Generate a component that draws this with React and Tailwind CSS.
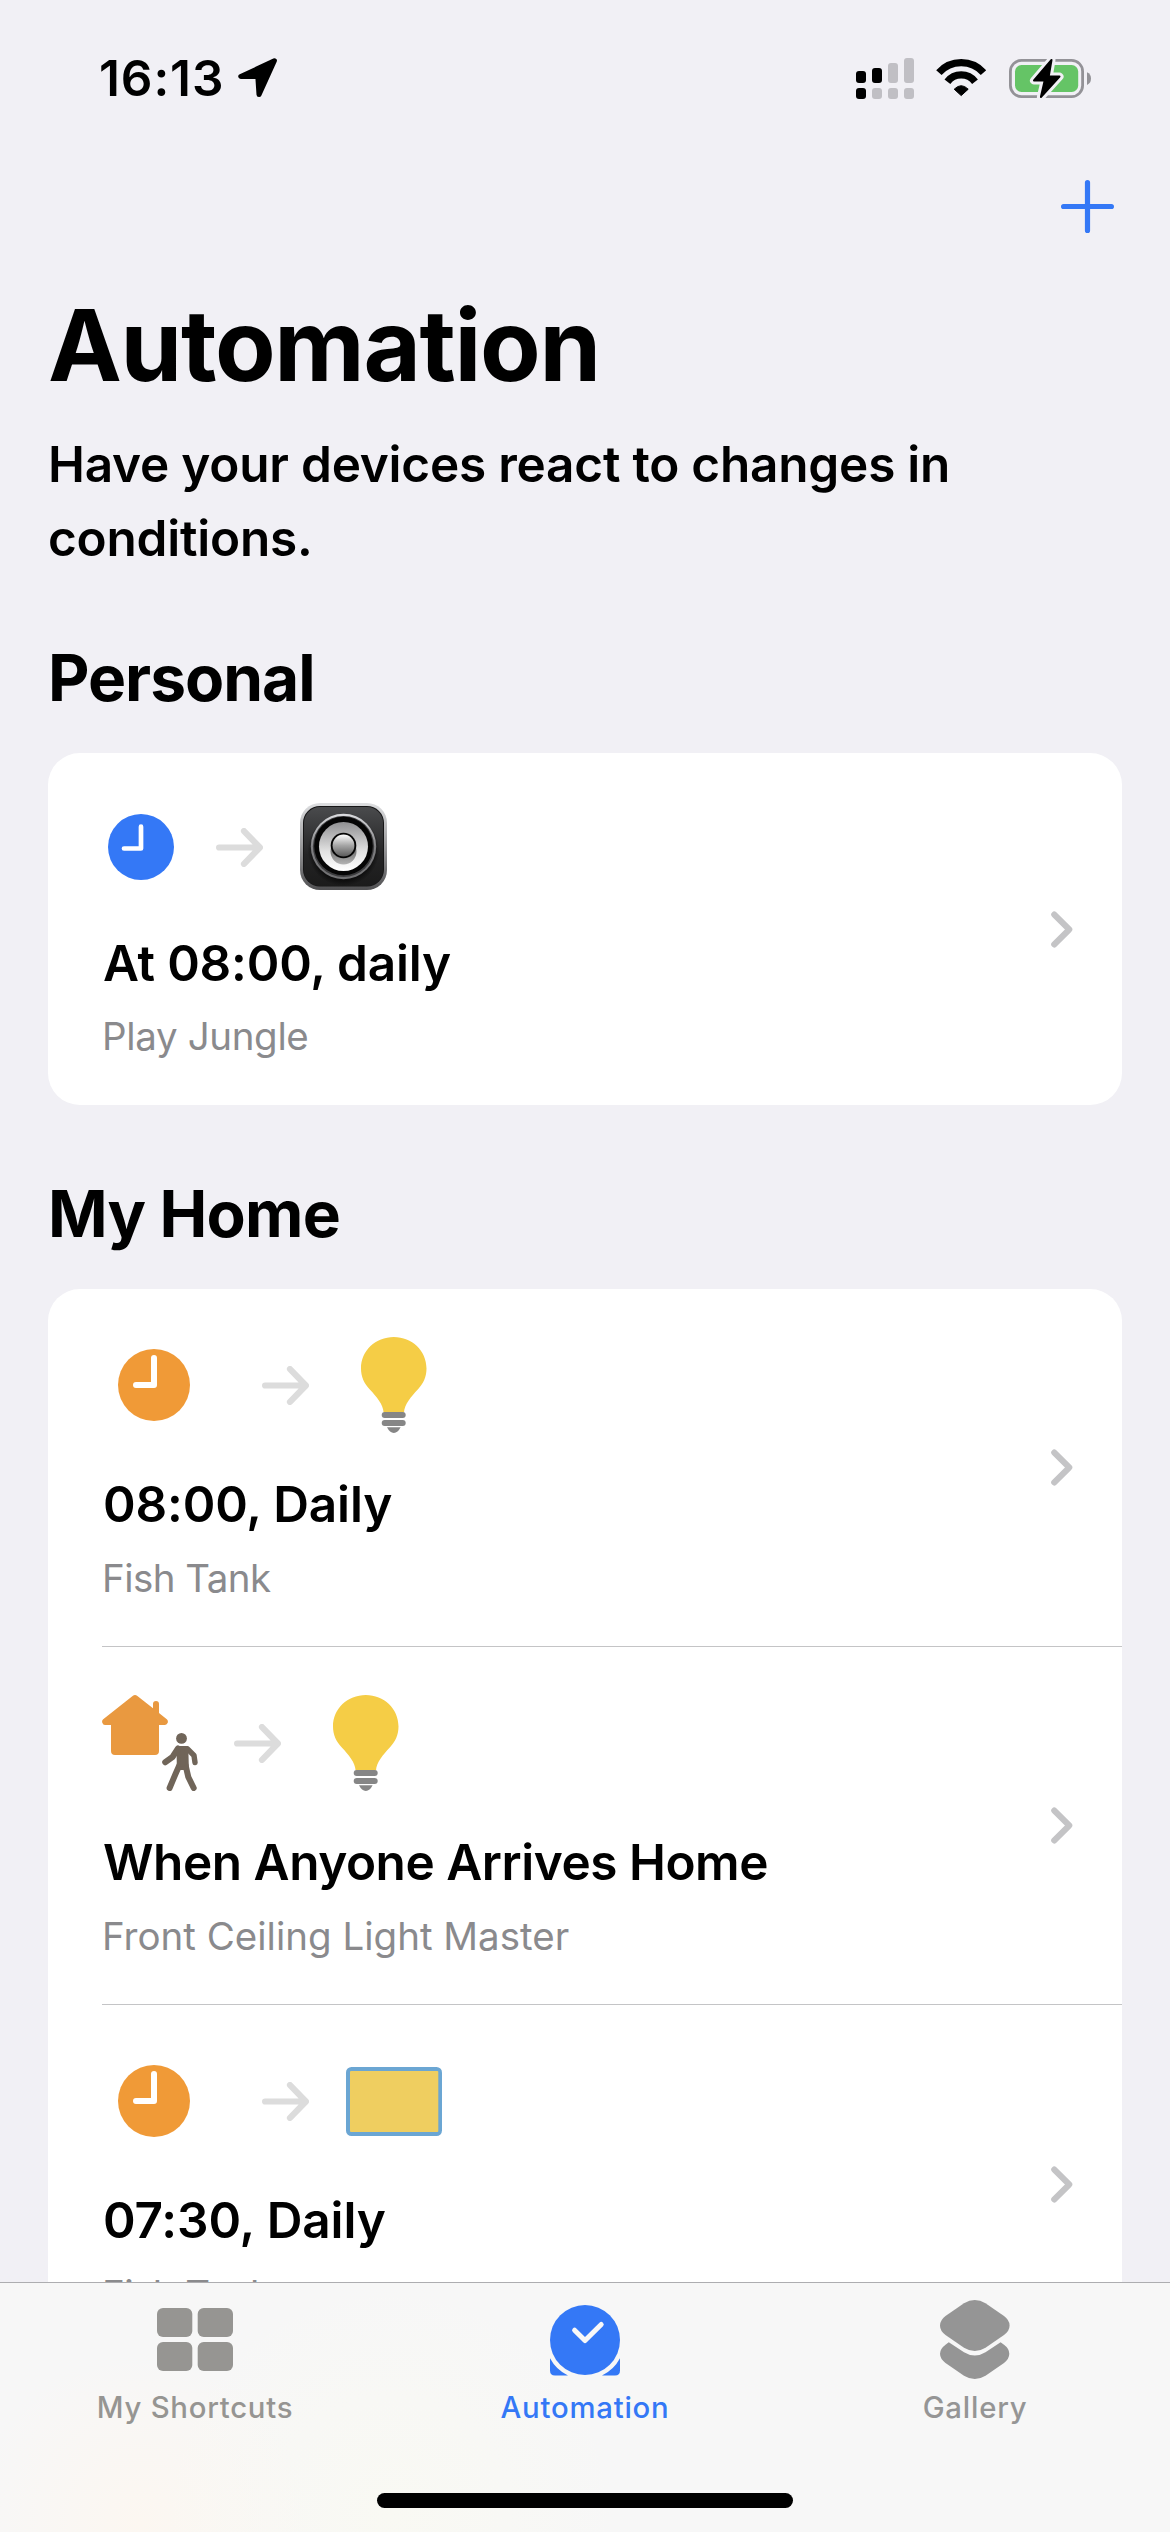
import clsx from 'clsx';

const LocationIcon = () => (
  <svg width="40" height="40" viewBox="0 0 40 40" stroke="#000" strokeWidth="5" strokeLinejoin="round">
    <path d="M36.4 2.8L2.8 18.5H19.8L21 36.6Z" />
  </svg>
);

const SignalIcon = () => (
  <svg width="58" height="41" viewBox="0 0 58 41">
    <rect x="0" y="13" width="10" height="12" rx="3" />
    <rect x="16" y="10" width="10" height="15" rx="3" />
    <g fill="#c0bfc4">
      <rect x="32" y="5" width="10" height="20" rx="3" />
      <rect x="48" y="0" width="10" height="25" rx="3" />
      <rect x="16" y="30" width="10" height="11" rx="3" />
      <rect x="32" y="30" width="10" height="11" rx="3" />
      <rect x="48" y="30" width="10" height="11" rx="3" />
    </g>
    <rect x="0" y="30" width="10" height="11" rx="3" />
  </svg>
);

const WifiIcon = () => (
  <svg width="51" height="38" viewBox="0 0 51 38" fill="none" stroke="#000" strokeWidth="7.3">
    <path d="M2.9 13.6A30 30 0 0 1 47.5 13.6" />
    <path d="M11.4 22.7A17.4 17.4 0 0 1 39 22.7" />
    <path d="M18.2 30.2Q25.2 23.2 32.2 30.2L25.2 36.6Z" fill="#000" stroke="#000" strokeWidth="1" strokeLinejoin="round" />
  </svg>
);

const BatteryIcon = () => {
  const bolt = 'M42.5 1L25 21.5H35.7L31.9 38L50.5 17.6H39.7Z';
  return (
    <svg width="82" height="39" viewBox="0 0 82 39" className="overflow-visible">
      <rect x="1.4" y="1.4" width="72.2" height="36.2" rx="11" fill="none" stroke="#939297" strokeWidth="2.8" />
      <path d="M78 13.2Q82 15 82 19.5T78 26Z" fill="#939297" />
      <rect x="6" y="6" width="63.2" height="27" rx="6.5" fill="#65c466" />
      <path d={bolt} fill="#f1f0f5" stroke="#f1f0f5" strokeWidth="8" strokeLinejoin="round" />
      <path d={bolt} stroke="#000" strokeWidth="2" strokeLinejoin="round" />
    </svg>
  );
};

const ClockBlue = () => (
  <svg width="66" height="66" viewBox="0 0 66 66">
    <circle cx="33" cy="33" r="33" fill="#3478f6" />
    <path d="M33 12.7V34.5H16" fill="none" stroke="#fff" strokeWidth="4.7" strokeLinecap="round" strokeLinejoin="round" />
  </svg>
);

const ClockOrange = () => (
  <svg width="72" height="72" viewBox="0 0 72 72">
    <circle cx="36" cy="36" r="36" fill="#f09a37" />
    <path d="M36 9V36H18" fill="none" stroke="#fff" strokeWidth="6" strokeLinecap="round" strokeLinejoin="round" />
  </svg>
);

const ArrowIcon = () => (
  <svg width="47" height="39" viewBox="0 0 47 39" fill="none" stroke="#dcdcdc" strokeWidth="6.2" strokeLinecap="round" strokeLinejoin="round">
    <path d="M3.1 19.5H43.5M28 3.1L43.9 19.5L28 35.9" />
  </svg>
);

const SpeakerIcon = () => (
  <svg width="87" height="87" viewBox="0 0 87 87">
    <defs>
      <linearGradient id="spk-edge" x1="0" y1="0" x2="0" y2="1">
        <stop offset="0" stopColor="#dedfe1" />
        <stop offset="0.5" stopColor="#9a9a9c" />
        <stop offset="1" stopColor="#505052" />
      </linearGradient>
      <linearGradient id="spk-body" x1="0" y1="0" x2="0" y2="1">
        <stop offset="0" stopColor="#4a4b4d" />
        <stop offset="0.6" stopColor="#242425" />
        <stop offset="1" stopColor="#1b1b1b" />
      </linearGradient>
      <radialGradient id="spk-shade">
        <stop offset="0.7" stopColor="#000" />
        <stop offset="1" stopColor="#000" stopOpacity="0" />
      </radialGradient>
      <linearGradient id="spk-ring" x1="0" y1="0" x2="0" y2="1">
        <stop offset="0" stopColor="#dcdde0" />
        <stop offset="0.5" stopColor="#808083" />
        <stop offset="1" stopColor="#6f6f71" />
      </linearGradient>
      <linearGradient id="spk-cone" x1="0" y1="0" x2="0" y2="1">
        <stop offset="0" stopColor="#909092" />
        <stop offset="0.6" stopColor="#e2e2e2" />
        <stop offset="1" stopColor="#fff" />
      </linearGradient>
      <linearGradient id="spk-drop" x1="0" y1="0" x2="0" y2="1">
        <stop offset="0.5" stopColor="#777" />
        <stop offset="1" stopColor="#b4b4b4" />
      </linearGradient>
      <linearGradient id="spk-dome" x1="0" y1="0" x2="0" y2="1">
        <stop offset="0" stopColor="#fff" />
        <stop offset="0.5" stopColor="#a5a5a5" />
        <stop offset="1" stopColor="#5c5c5c" />
      </linearGradient>
    </defs>
    <rect width="87" height="87" rx="20" fill="url(#spk-edge)" />
    <rect x="3" y="3" width="81" height="80.5" rx="17" fill="#161617" />
    <rect x="4" y="4" width="79" height="79" rx="16" fill="url(#spk-body)" />
    <circle cx="43.5" cy="47" r="36" fill="url(#spk-shade)" />
    <circle cx="43.5" cy="43.5" r="32.7" fill="url(#spk-ring)" />
    <circle cx="43.5" cy="43.5" r="30.6" fill="#3c3c3e" />
    <circle cx="43.5" cy="43" r="29.3" fill="#050505" />
    <circle cx="43.5" cy="43.5" r="24.5" fill="url(#spk-cone)" />
    <circle cx="43.5" cy="48.5" r="13" fill="url(#spk-drop)" />
    <circle cx="43.5" cy="42.5" r="12.8" fill="#050505" />
    <circle cx="43.5" cy="42.5" r="10.9" fill="url(#spk-dome)" />
  </svg>
);

const BulbIcon = () => (
  <svg width="66" height="96" viewBox="0 0 66 96">
    <path
      fill="#f5cd46"
      d="M32.8 0C51 0 65.5 13.8 65.5 31.5C65.5 40 62.3 46.6 57 52.3C50 59.8 43.4 67.5 43 75.5H22.6C22.2 67.5 15.6 59.8 8.6 52.3C3.3 46.6 0 40 0 31.5C0 13.8 14.6 0 32.8 0Z"
    />
    <g fill="#868686">
      <rect x="20.7" y="75" width="24" height="6" rx="3" />
      <rect x="20.7" y="83" width="24" height="6" rx="3" />
      <path d="M26 90.3H39.6Q36.8 96 32.8 96T26 90.3Z" />
    </g>
  </svg>
);

const ArriveHomeIcon = () => (
  <svg width="96" height="96" viewBox="0 0 96 96">
    <path
      fill="#e99940"
      d="M30.6 .9Q33 -.9 35.4 .9L51 13.2V9Q51 6 54 6T57 9V18L64.8 24.3Q66.4 25.8 65.7 27.8T63 30H57V56Q57 60 53 60H13Q9 60 9 56V30H3Q1 30 .3 27.8T1.2 24.3Z"
    />
    <g fill="none" stroke="#706559" strokeLinecap="round" strokeLinejoin="round">
      <circle cx="79.5" cy="43.4" r="5.4" fill="#706559" stroke="none" />
      <path d="M76 53.5L70.5 62L63.2 67.3" strokeWidth="6" />
      <path d="M85.5 53.8L92 60.5L93 67.5" strokeWidth="5.4" />
      <path d="M77.5 70L73.5 79L67.6 93" strokeWidth="6" />
      <path d="M83.5 70L86.3 82L91.7 93" strokeWidth="6" />
      <path d="M76.3 52.8H84.5L85 71L83.6 73.2H77.5L76.6 70Z" fill="#706559" strokeWidth="3.6" />
    </g>
  </svg>
);

const ShadeIcon = () => (
  <svg width="96" height="69" viewBox="0 0 96 69">
    <rect width="96" height="69" rx="5.5" fill="#6ba6d3" />
    <rect x="4" y="4" width="88.3" height="61" rx="1" fill="#efce60" />
  </svg>
);

const ChevronIcon = () => (
  <svg width="22" height="37" viewBox="0 0 22 37" fill="none" stroke="#c4c4c6" strokeWidth="6" strokeLinecap="round" strokeLinejoin="round">
    <path d="M3.2 3.5L18.3 18.5L3.2 33.5" />
  </svg>
);

const GridIcon = () => (
  <svg width="76" height="63" viewBox="0 0 76 63" fill="#969592">
    <rect width="35.3" height="29" rx="6" />
    <rect x="40.7" width="35.3" height="29" rx="6" />
    <rect y="34" width="35.3" height="29" rx="6" />
    <rect x="40.7" y="34" width="35.3" height="29" rx="6" />
  </svg>
);

const AutomationIcon = () => (
  <svg width="70" height="71" viewBox="0 0 70 71" fill="#3478f6">
    <circle cx="35" cy="35" r="35" />
    <path d="M0 53.3A39.6 39.6 0 0 0 18 70.5H5Q0 70.5 0 65.5ZM70 53.3A39.6 39.6 0 0 1 52 70.5H65Q70 70.5 70 65.5Z" />
    <path d="M24.6 25.2L35 35.6L51.2 19.4" fill="none" stroke="#f8f8f8" strokeWidth="5" strokeLinecap="round" strokeLinejoin="round" />
  </svg>
);

const GalleryIcon = () => (
  <svg width="70" height="79" viewBox="0 0 70 79" fill="#959595">
    <path d="M24 3.3Q34.8 -3.3 45.5 3.3L64 16Q69.6 20.2 69.6 25.5T64 35L45.5 47.7Q34.8 54.3 24 47.7L5.5 35Q0 30.8 0 25.5T5.5 16Z" />
    <path d="M8.8 42.3L24 52.2Q34.8 58.8 45.5 52.2L60.6 42.3L64 44.7Q69.3 48.6 69.3 53.8T64 62.9L45.5 75.7Q34.8 82.3 24 75.7L5.5 62.9Q0 58.8 0 53.8T5.5 44.7Z" />
  </svg>
);

const homeItems = [
  { title: '08:00, Daily', subtitle: 'Fish Tank', kind: 'clock', Target: BulbIcon, tracking: 'tracking-[-0.15px]', subTracking: 'tracking-[-0.55px]' },
  { title: 'When Anyone Arrives Home', subtitle: 'Front Ceiling Light Master', kind: 'arrive', Target: BulbIcon, tracking: 'tracking-[-0.45px]', subTracking: 'tracking-normal' },
  { title: '07:30, Daily', subtitle: 'Fish Tank', kind: 'clock', Target: ShadeIcon, tracking: 'tracking-[-0.1px]', subTracking: 'tracking-[-0.55px]' },
];

const HomeRow = ({ item, last }) => {
  const { Target } = item;
  return (
    <li className="flex h-[358px] pl-[54px]">
      <div className={clsx('flex flex-1 items-center justify-between pr-[49px]', !last && 'border-b border-[#c4c4c6]')}>
        <div className="self-start pt-12">
          <div className="flex h-24 items-center">
            {item.kind === 'clock' ? (
              <div className="ml-4 mr-[72px]"><ClockOrange /></div>
            ) : (
              <div className="mr-9"><ArriveHomeIcon /></div>
            )}
            <ArrowIcon />
            <div className="ml-[37px] flex w-24 justify-center"><Target /></div>
          </div>
          <h3 className={clsx('mt-[41px] ml-px whitespace-nowrap text-[49.5px] leading-[60px] font-semibold', item.tracking)}>{item.title}</h3>
          <p className={clsx('mt-[21px] whitespace-nowrap text-[38.5px] leading-[46px] text-[#8a8a8d]', item.subTracking)}>{item.subtitle}</p>
        </div>
        <ChevronIcon />
      </div>
    </li>
  );
};

const App = () => (
  <div className="flex h-[2532px] w-[1170px] flex-col overflow-hidden bg-[#f1f0f5] font-['Inter',sans-serif] text-black">
    {/* Status bar */}
    <header className="flex h-[156px] shrink-0 items-center justify-between pl-[99px] pr-[79px]">
      <div className="flex items-center gap-[14px]">
        <span className="text-[49.5px] leading-[60px] font-semibold tracking-[0.9px]">16:13</span>
        <LocationIcon />
      </div>
      <div className="flex items-center gap-[22px]">
        <SignalIcon />
        <WifiIcon />
        <BatteryIcon />
      </div>
    </header>

    <main className="flex min-h-0 flex-1 flex-col overflow-hidden px-12">
      <div className="flex h-[101px] shrink-0 items-center justify-end pr-2">
        <svg width="53" height="53" viewBox="0 0 53 53" stroke="#3478f6" strokeWidth="5.2" strokeLinecap="round">
          <path d="M26.5 2.6V50.4M2.6 26.5H50.4" />
        </svg>
      </div>

      <h1 className="mt-7 text-[99px] leading-[120px] font-bold tracking-[-1.3px]">Automation</h1>
      <p className="mt-[22px] text-[49.5px] leading-[74px] font-semibold tracking-[-0.22px]">
        Have your devices react to changes in<br />conditions.
      </p>

      <h2 className="mt-16 text-[64px] leading-[78px] font-bold tracking-[-1px]">Personal</h2>
      <section className="mt-9 flex h-[352px] shrink-0 items-center justify-between rounded-[32px] bg-white pl-[54px] pr-[49px]">
        <div className="self-start pt-[46px]">
          <div className="flex h-24 items-center pl-1.5">
            <ClockBlue />
            <div className="ml-[42px] mr-[37px]"><ArrowIcon /></div>
            <div className="pb-0.5"><SpeakerIcon /></div>
          </div>
          <h3 className="mt-[38px] ml-px text-[49.5px] leading-[60px] font-semibold tracking-[-0.2px]">At 08:00, daily</h3>
          <p className="mt-5 text-[38.5px] leading-[46px] tracking-[-0.35px] text-[#8a8a8d]">Play Jungle</p>
        </div>
        <ChevronIcon />
      </section>

      <h2 className="mt-[70px] text-[64px] leading-[78px] font-bold tracking-[-0.8px]">My Home</h2>
      <ul className="mt-9 shrink-0 rounded-[32px] bg-white">
        {homeItems.map((item, i) => (
          <HomeRow key={item.title} item={item} last={i === homeItems.length - 1} />
        ))}
      </ul>
    </main>

    {/* Tab bar */}
    <nav className="flex h-[250px] shrink-0 flex-col justify-between border-t border-[#adadb0] bg-[#f7f7f7] bg-[radial-gradient(circle_at_140px_240px,#fcf7f1_0,transparent_170px),radial-gradient(circle_at_390px_230px,#f9f9f3_0,transparent_230px)]">
      <div className="grid grid-cols-3 text-[29.3px] leading-9 font-medium text-[#969592]">
        <div className="flex flex-col items-center">
          <div className="mb-1 flex h-[103px] items-center pt-[10px]"><GridIcon /></div>
          <span className="tracking-[0.75px]">My Shortcuts</span>
        </div>
        <div className="flex flex-col items-center text-[#3478f6]">
          <div className="mb-1 flex h-[103px] items-center pt-3"><AutomationIcon /></div>
          <span className="tracking-[0.8px]">Automation</span>
        </div>
        <div className="flex flex-col items-center text-[#959595]">
          <div className="mb-1 flex h-[103px] items-center pt-[10px]"><GalleryIcon /></div>
          <span className="tracking-[0.8px]">Gallery</span>
        </div>
      </div>
      <div className="mx-auto mb-6 h-[15px] w-[416px] rounded-full bg-black" />
    </nav>
  </div>
);

export default App;
